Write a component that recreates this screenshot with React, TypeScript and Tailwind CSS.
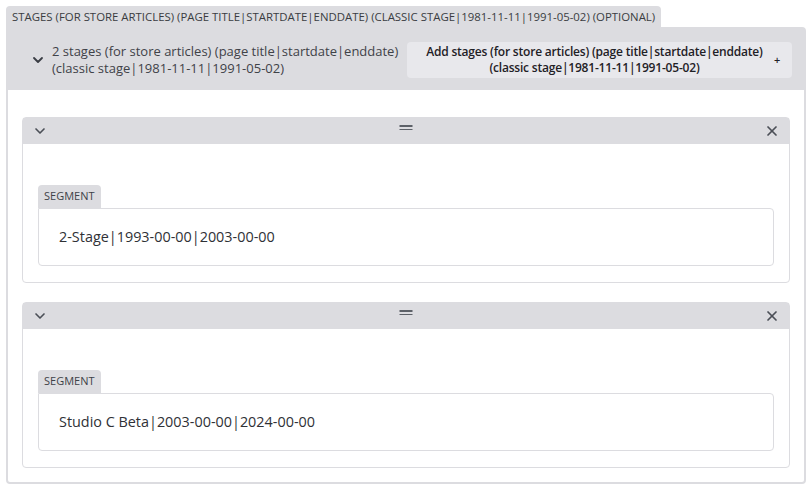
import { ChevronDown, X } from "lucide-react";

const font = { fontFamily: '"Open Sans", "Noto Sans", sans-serif' };

function Segment({ value }: { value: string }) {
  return (
    <div className="rounded-[4px] border-[1.5px] border-[#dcdce0] bg-white">
      {/* card header */}
      <div className="relative flex h-[26px] items-center justify-between bg-[#dcdce0] pl-[9px] pr-[9px]">
        <ChevronDown size={16} strokeWidth={2.5} className="text-[#4b4f57]" />
        <div className="absolute left-1/2 top-[7px] flex -translate-x-1/2 flex-col gap-[2px]">
          <span className="block h-[1.5px] w-[13px] bg-[#5d6168]" />
          <span className="block h-[1.5px] w-[13px] bg-[#5d6168]" />
        </div>
        <X size={16} strokeWidth={2.6} className="text-[#4b4f57]" />
      </div>
      <div className="px-[15px] pb-[16px] pt-[41px]">
        <div className="flex h-[23px] w-fit items-center rounded-t-[4px] bg-[#dcdce0] px-[6px] text-[11px] text-[#3f4248]">
          SEGMENT
        </div>
        <div className="flex h-[58px] items-center rounded-b-[4px] rounded-tr-[4px] border-[1.5px] border-[#dcdce0] px-[20px] text-[14.4px] text-[#2f3136]">
          {value}
        </div>
      </div>
    </div>
  );
}

export default function App() {
  return (
    <div className="h-[489px] w-[812px] bg-white p-[6px]" style={font}>
      {/* field label tab */}
      <div className="flex h-[21px] w-fit items-center rounded-t-[4px] bg-[#dcdce0] px-[6px] text-[11.4px] text-[#3a3c42]">
        STAGES (FOR STORE ARTICLES) (PAGE TITLE|STARTDATE|ENDDATE) (CLASSIC STAGE|1981-11-11|1991-05-02) (OPTIONAL)
      </div>

      <div className="rounded-b-[4px] rounded-tr-[4px] border-2 border-[#dcdce0]">
        {/* header */}
        <div className="flex h-[61px] items-center justify-between bg-[#dcdce0] pl-[22px] pr-[12px]">
          <div className="flex items-center gap-[6px]">
            <ChevronDown size={16} strokeWidth={2.75} className="text-[#3a3d44]" />
            <p className="text-[13px] leading-[17px] text-[#3f4248]">
              <span className="block">2 stages (for store articles) (page title|startdate|enddate)</span>
              <span className="block">(classic stage|1981-11-11|1991-05-02)</span>
            </p>
          </div>
          <button className="flex h-[36px] w-[385px] items-center rounded-[4px] bg-[#e8e8ec] pl-[14px] pr-[12px] text-[12px] font-semibold leading-[16px] tracking-[-0.2px] text-[#1f2126]">
            <span className="flex-1 whitespace-nowrap text-center">
              <span className="block">Add stages (for store articles) (page title|startdate|enddate)</span>
              <span className="block">(classic stage|1981-11-11|1991-05-02)</span>
            </span>
            <span className="ml-[6px] text-[11px]">+</span>
          </button>
        </div>

        {/* body */}
        <div className="flex flex-col gap-[19px] px-[14px] pb-[14px] pt-[27px]">
          <Segment value="2-Stage|1993-00-00|2003-00-00" />
          <Segment value="Studio C Beta|2003-00-00|2024-00-00" />
        </div>
      </div>
    </div>
  );
}
